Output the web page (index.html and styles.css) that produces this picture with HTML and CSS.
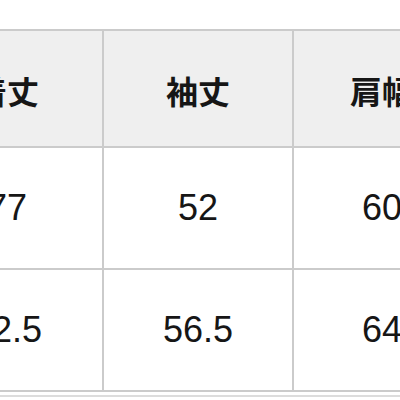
FILE: index.html
```html
<!DOCTYPE html>
<html lang="ja">
<head>
<meta charset="utf-8">
<link rel="stylesheet" href="styles.css">
</head>
<body>
<div class="sheet">
  <div class="size-table">
    <div class="cell head">着丈</div>
    <div class="cell head">袖丈</div>
    <div class="cell head">肩幅</div>
    <div class="cell num">77</div>
    <div class="cell num">52</div>
    <div class="cell num">60</div>
    <div class="cell num">72.5</div>
    <div class="cell num">56.5</div>
    <div class="cell num">64</div>
  </div>
  <div class="under-rule"></div>
</div>
</body>
</html>
```
FILE: styles.css
```css
html, body {
  margin: 0;
  padding: 0;
  background: #ffffff;
  overflow: hidden;
  width: 400px;
  height: 400px;
}
.sheet {
  padding-top: 29px;
  margin-left: -90px;
  width: 600px;
}
.size-table {
  display: grid;
  grid-template-columns: 190px 188px 176px;
  grid-template-rows: 115px 120px 120px;
  gap: 2px;
  padding: 2px;
  background: #cbcbcb;
  width: max-content;
}
.cell {
  display: flex;
  align-items: center;
  justify-content: center;
  background: #ffffff;
  color: #161616;
}
.head {
  background: #efefef;
  font-family: "Noto Sans CJK JP", "Noto Sans", sans-serif;
  font-weight: 700;
  font-size: 32px;
  padding-top: 2px;
}
.num {
  font-family: "Liberation Sans", Arial, sans-serif;
  font-size: 36px;
}
.under-rule {
  margin-top: 3px;
  border-top: 2px solid #dcdcdc;
  width: 600px;
}
```
